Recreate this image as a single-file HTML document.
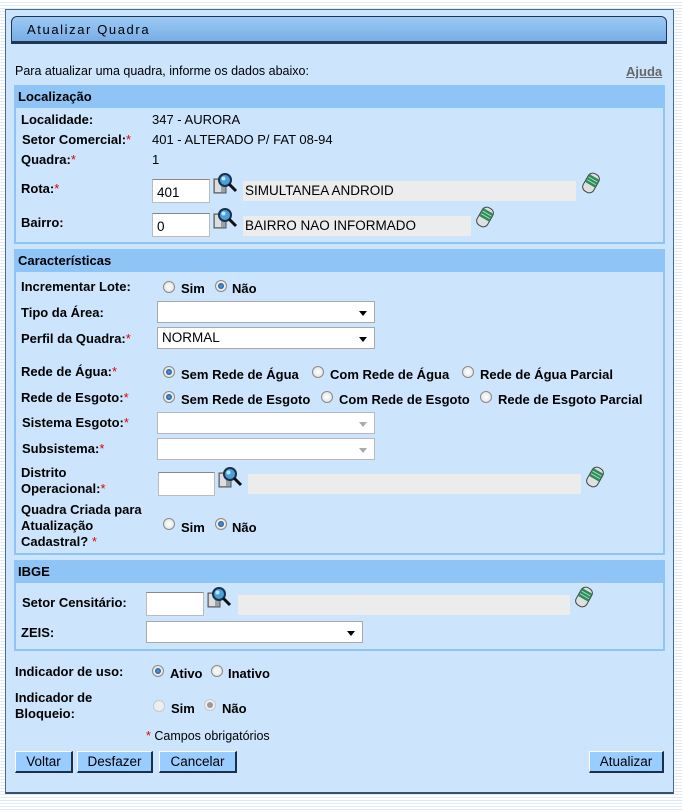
<!DOCTYPE html>
<html><head><meta charset="utf-8"><style>
*{margin:0;padding:0;box-sizing:border-box}
body{width:682px;height:810px;position:relative;overflow:hidden;background:repeating-linear-gradient(#fff 0 2px,#dfeaf6 2px 3px);font-family:"Liberation Sans",Arial,sans-serif;font-size:13px;color:#000}
.a{position:absolute;white-space:nowrap}
#panel{position:absolute;left:5px;top:9px;width:669px;height:785px;background:#cce5fc;border:1px solid #4a6a8a;border-bottom:2px solid #36506a}
#hdr{position:absolute;left:11px;top:16px;width:656px;height:28px;background:linear-gradient(#9ccaf5,#78ade6);border:1px solid #1f3550;border-bottom:3px solid #1f3550;border-radius:6px 6px 0 0}
.box{position:absolute;left:14px;width:651px;border:2px solid #8fc4f6}
.bh{height:21px;background:#8fc4f6;font-weight:bold;padding:2px 0 0 2px;font-size:13px}
b{font-weight:bold}
.r{color:#e00000}
.in{position:absolute;background:#fff;border:1px solid #bbb;border-top-color:#888;height:24px;font-size:13.5px;padding:5px 0 0 4px}
.ro{position:absolute;background:#ececec;height:20px;font-size:13.5px;padding:2px 0 0 2px}
.sel{position:absolute;background:#fff;border:1px solid #a9a9a9;height:22px;font-size:13.5px;padding:2px 0 0 4px}
.sel:after{content:"";position:absolute;right:7px;top:9px;border:4px solid transparent;border-top:5px solid #000;border-bottom:0}
.sel.dis{border-color:#b8b8b8}
.sel.dis:after{border-top-color:#aaa}
.rad{position:absolute;width:12px;height:12px;border-radius:50%;border:1px solid #8a8a8a;background:radial-gradient(#fff,#ddd)}
.rad.on:after{content:"";position:absolute;left:2px;top:2px;width:6px;height:6px;border-radius:50%;background:radial-gradient(#5aa0e0,#123a70)}
.rad.dis{border-color:#c8c8c8;background:#eee}
.rad.dison:after{content:"";position:absolute;left:2px;top:2px;width:6px;height:6px;border-radius:50%;background:#999}
.btn{position:absolute;top:751px;height:22px;background:#99ccff;border:1px solid #fff;border-right:2px solid #1a2f4a;border-bottom:2px solid #1a2f4a;font-size:13.5px;text-align:center;padding-top:2px}
</style></head><body>
<div id="panel"></div>
<div id="hdr"></div>
<div class="a" style="left:27px;top:22px;font-size:13px;letter-spacing:1.6px">Atualizar Quadra</div>
<div class="a" style="left:15px;top:64px;font-size:12.5px">Para atualizar uma quadra, informe os dados abaixo:</div>
<div class="a" style="left:626px;top:64px;font-weight:bold;color:#666;text-decoration:underline">Ajuda</div>

<svg width="0" height="0" style="position:absolute"><defs>
<g id="lupa"><rect x="1" y="7" width="12" height="14" fill="#9aa0a6" stroke="#555"/><rect x="2" y="8" width="6" height="12" fill="#ddd"/><circle cx="12" cy="8" r="6" fill="#4aa0d8" stroke="#1a3050" stroke-width="2"/><circle cx="10.5" cy="6.5" r="2" fill="#bfe6ff"/><line x1="16" y1="12" x2="23" y2="19" stroke="#111" stroke-width="3"/></g>
<g id="bor"><g transform="rotate(30 9 11)"><rect x="3" y="1" width="12" height="20" rx="5" fill="#e0e0e0" stroke="#444"/><rect x="3.5" y="4" width="11" height="9" fill="#2f8a5a"/><line x1="4" y1="7" x2="14" y2="7" stroke="#9de0b8"/><line x1="4" y1="10" x2="14" y2="10" stroke="#9de0b8"/></g></g>
</defs></svg>

<!-- Localização -->
<div class="box" style="top:85px;height:159px"><div class="bh">Localização</div></div>
<div class="a" style="left:21px;top:112px"><b>Localidade:</b></div>
<div class="a" style="left:152px;top:112px">347 - AURORA</div>
<div class="a" style="left:22px;top:132px"><b>Setor Comercial:</b><span class="r">*</span></div>
<div class="a" style="left:152px;top:132px">401 - ALTERADO P/ FAT 08-94</div>
<div class="a" style="left:21px;top:152px"><b>Quadra:</b><span class="r">*</span></div>
<div class="a" style="left:152px;top:152px">1</div>
<div class="a" style="left:21px;top:181px"><b>Rota:</b><span class="r">*</span></div>
<div class="in" style="left:152px;top:179px;width:58px">401</div>
<svg class="a" style="left:213px;top:172px" width="26" height="24"><use href="#lupa"/></svg>
<div class="ro" style="left:243px;top:181px;width:333px">SIMULTANEA ANDROID</div>
<svg class="a" style="left:582px;top:172px" width="20" height="24"><use href="#bor"/></svg>
<div class="a" style="left:21px;top:215px"><b>Bairro:</b></div>
<div class="in" style="left:152px;top:213px;width:58px">0</div>
<svg class="a" style="left:213px;top:207px" width="26" height="24"><use href="#lupa"/></svg>
<div class="ro" style="left:243px;top:216px;width:228px">BAIRRO NAO INFORMADO</div>
<svg class="a" style="left:476px;top:206px" width="20" height="24"><use href="#bor"/></svg>

<!-- Características -->
<div class="box" style="top:249px;height:306px"><div class="bh">Características</div></div>
<div class="a" style="left:21px;top:279px"><b>Incrementar Lote:</b></div>
<div class="rad" style="left:163px;top:281px"></div><div class="a" style="left:181px;top:281px"><b>Sim</b></div>
<div class="rad on" style="left:215px;top:280px"></div><div class="a" style="left:232px;top:281px"><b>Não</b></div>
<div class="a" style="left:21px;top:305px"><b>Tipo da Área:</b></div>
<div class="sel" style="left:157px;top:301px;width:218px"></div>
<div class="a" style="left:21px;top:331px"><b>Perfil da Quadra:</b><span class="r">*</span></div>
<div class="sel" style="left:157px;top:327px;width:218px">NORMAL</div>
<div class="a" style="left:21px;top:364px"><b>Rede de Água:</b><span class="r">*</span></div>
<div class="rad on" style="left:163px;top:366px"></div><div class="a" style="left:181px;top:367px"><b>Sem Rede de Água</b></div>
<div class="rad" style="left:312px;top:366px"></div><div class="a" style="left:330px;top:367px"><b>Com Rede de Água</b></div>
<div class="rad" style="left:462px;top:366px"></div><div class="a" style="left:480px;top:367px"><b>Rede de Água Parcial</b></div>
<div class="a" style="left:21px;top:390px"><b>Rede de Esgoto:</b><span class="r">*</span></div>
<div class="rad on" style="left:163px;top:391px"></div><div class="a" style="left:181px;top:392px"><b>Sem Rede de Esgoto</b></div>
<div class="rad" style="left:321px;top:391px"></div><div class="a" style="left:339px;top:392px"><b>Com Rede de Esgoto</b></div>
<div class="rad" style="left:480px;top:391px"></div><div class="a" style="left:498px;top:392px"><b>Rede de Esgoto Parcial</b></div>
<div class="a" style="left:22px;top:415px"><b>Sistema Esgoto:</b><span class="r">*</span></div>
<div class="sel dis" style="left:157px;top:412px;width:218px"></div>
<div class="a" style="left:22px;top:441px"><b>Subsistema:</b><span class="r">*</span></div>
<div class="sel dis" style="left:157px;top:438px;width:218px"></div>
<div class="a" style="left:21px;top:465px;line-height:16px"><b>Distrito<br>Operacional:</b><span class="r">*</span></div>
<div class="in" style="left:158px;top:472px;width:57px"></div>
<svg class="a" style="left:218px;top:466px" width="26" height="24"><use href="#lupa"/></svg>
<div class="ro" style="left:248px;top:474px;width:333px"></div>
<svg class="a" style="left:586px;top:466px" width="20" height="24"><use href="#bor"/></svg>
<div class="a" style="left:21px;top:502px;line-height:16px"><b>Quadra Criada para<br>Atualização<br>Cadastral? </b><span class="r">*</span></div>
<div class="rad" style="left:163px;top:518px"></div><div class="a" style="left:181px;top:520px"><b>Sim</b></div>
<div class="rad on" style="left:215px;top:518px"></div><div class="a" style="left:232px;top:520px"><b>Não</b></div>

<!-- IBGE -->
<div class="box" style="top:560px;height:91px"><div class="bh">IBGE</div></div>
<div class="a" style="left:22px;top:595px"><b>Setor Censitário:</b></div>
<div class="in" style="left:146px;top:592px;width:58px"></div>
<svg class="a" style="left:207px;top:586px" width="26" height="24"><use href="#lupa"/></svg>
<div class="ro" style="left:238px;top:595px;width:332px"></div>
<svg class="a" style="left:575px;top:586px" width="20" height="24"><use href="#bor"/></svg>
<div class="a" style="left:21px;top:625px"><b>ZEIS:</b></div>
<div class="sel" style="left:146px;top:621px;width:217px"></div>

<div class="a" style="left:15px;top:664px"><b>Indicador de uso:</b></div>
<div class="rad on" style="left:152px;top:665px"></div><div class="a" style="left:170px;top:666px"><b>Ativo</b></div>
<div class="rad" style="left:211px;top:665px"></div><div class="a" style="left:228px;top:666px"><b>Inativo</b></div>
<div class="a" style="left:15px;top:690px;line-height:16px"><b>Indicador de<br>Bloqueio:</b></div>
<div class="rad dis" style="left:153px;top:700px"></div><div class="a" style="left:171px;top:701px"><b>Sim</b></div>
<div class="rad dis dison" style="left:204px;top:699px"></div><div class="a" style="left:222px;top:701px"><b>Não</b></div>
<div class="a" style="left:146px;top:729px;font-size:12.5px"><span class="r">*</span> Campos obrigatórios</div>

<div class="btn" style="left:15px;width:58px">Voltar</div>
<div class="btn" style="left:77px;width:76px">Desfazer</div>
<div class="btn" style="left:159px;width:78px">Cancelar</div>
<div class="btn" style="left:589px;width:75px">Atualizar</div>
</body></html>
